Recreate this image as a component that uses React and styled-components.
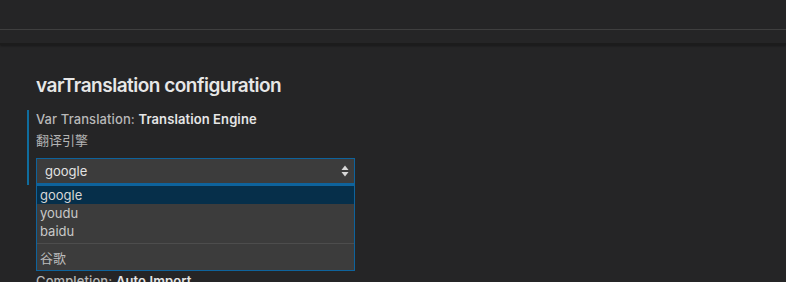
import React from "react";
import styled, { createGlobalStyle } from "styled-components";

const Global = createGlobalStyle`
  html, body { margin: 0; padding: 0; background: #252526; }
  body { font-family: Inter, "Noto Sans", "Noto Sans CJK SC", sans-serif; -webkit-font-smoothing: antialiased; overflow: hidden; }
`;

const Page = styled.div`
  width: 786px;
  height: 282px;
  background: #252526;
  overflow: hidden;
`;

const TopBar = styled.div`
  height: 29px;
  border-bottom: 1px solid #414141;
`;

const SubBar = styled.div`
  height: 13px;
  border-bottom: 2px solid #1c1c1c;
  box-shadow: 0 1px 2px rgba(0,0,0,0.35);
`;

const Content = styled.div`
  padding: 28px 0 0 27px;
`;

const Title = styled.h2`
  margin: 0 0 11px 9px;
  font-size: 19px;
  font-weight: 600;
  color: #e7e7e7;
  line-height: 26px;
  letter-spacing: -0.5px;
`;

const Setting = styled.div`
  border-left: 2px solid #0f6d9e;
  padding-left: 7px;
  padding-bottom: 1px;
`;

const Label = styled.div`
  font-size: 13px;
  line-height: 18px;
  color: #b8b8b8;
  font-weight: 500;
  letter-spacing: 0.1px;
  b { color: #e6e6e6; font-weight: 600; }
`;

const Desc = styled.div`
  margin-top: 3px;
  font-size: 13px;
  line-height: 18px;
  color: #b4b4b4;
  font-family: "Noto Sans CJK SC", sans-serif;
`;

const SelectBox = styled.div`
  margin-top: 9px;
  height: 24px;
  background: #3c3c3c;
  border: 1px solid #0e639c;
  display: flex;
  align-items: center;
  justify-content: space-between;
  padding: 0 5px 0 8px;
  box-sizing: content-box;
  width: 304px;
  color: #e2e2e2;
  font-size: 13px;
`;

const Arrows = styled.svg`
  width: 8px;
  height: 12px;
`;

const Dropdown = styled.div`
  margin-left: 36px;
  width: 317px;
  background: #3c3c3c;
  border: 1px solid #0e639c;
  border-top-width: 2px;
  margin-top: -1px;
  padding-bottom: 2px;
`;

const Option = styled.div`
  height: 18px;
  line-height: 18px;
  padding-left: 3px;
  font-size: 13px;
  color: ${p => (p.$active ? "#d6d6d6" : "#c9c9c9")};
  background: ${p => (p.$active ? "#062f4a" : "transparent")};
`;

const Separator = styled.div`
  margin-top: 3px;
  border-top: 1px solid #4d4d4d;
`;

const Detail = styled.div`
  padding: 4px 0 0 3px;
  height: 20px;
  font-size: 13px;
  line-height: 20px;
  color: #bdbdbd;
  font-family: "Noto Sans CJK SC", sans-serif;
`;

const NextLabel = styled.div`
  margin: 1px 0 0 36px;
  font-size: 13px;
  line-height: 18px;
  color: #b8b8b8;
  font-weight: 500;
  letter-spacing: 0.1px;
  b { color: #e6e6e6; font-weight: 600; }
`;

export default function App() {
  return (
    <Page>
      <Global />
      <TopBar />
      <SubBar />
      <Content>
        <Title>varTranslation configuration</Title>
        <Setting>
          <Label>
            Var Translation: <b>Translation Engine</b>
          </Label>
          <Desc>翻译引擎</Desc>
          <SelectBox>
            <span>google</span>
            <Arrows viewBox="0 0 8 12">
              <path d="M4 0.5 L7.5 5 L0.5 5 Z" fill="#d8d8d8" />
              <path d="M4 11.5 L7.5 7 L0.5 7 Z" fill="#d8d8d8" />
            </Arrows>
          </SelectBox>
        </Setting>
      </Content>
      <Dropdown>
        <Option $active>google</Option>
        <Option>youdu</Option>
        <Option>baidu</Option>
        <Separator />
        <Detail>谷歌</Detail>
      </Dropdown>
      <NextLabel>
        Completion: <b>Auto Import</b>
      </NextLabel>
    </Page>
  );
}
